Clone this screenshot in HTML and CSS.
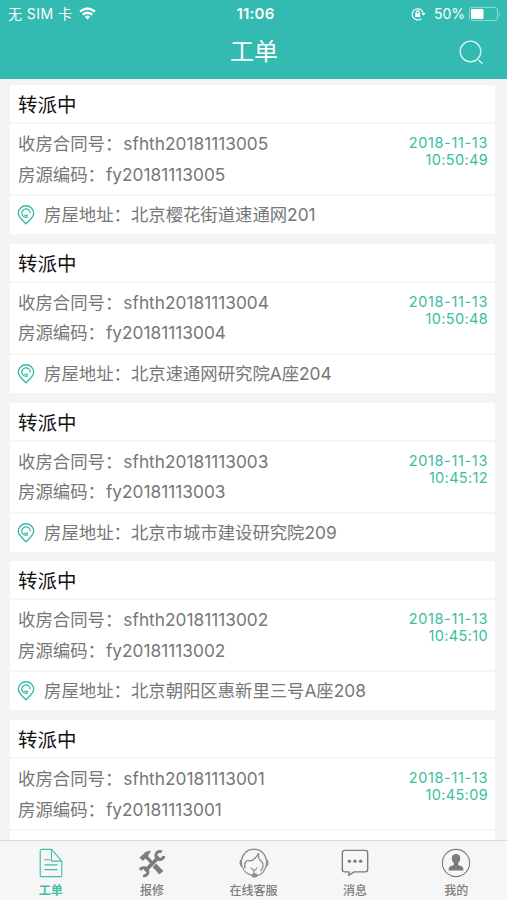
FILE: index.html
```html
<!DOCTYPE html>
<html lang="zh-CN">
<head>
  <meta charset="UTF-8">
  <meta name="viewport" content="width=device-width, initial-scale=1">
  <title>工单</title>
  <link rel="stylesheet" href="styles.css">
</head>
<body>
  <header class="header">
    <div class="status">
      <div class="status-left">
        <span>无 SIM 卡</span>
        <svg class="wifi" viewBox="0 0 17 13" fill="none" stroke="#fff" stroke-width="2.3">
          <path d="M1 4.7Q8.5-1.7 16 4.7M3.7 7.7Q8.5 3.7 13.3 7.7"/>
          <path d="M5.8 9.7Q8.5 7.5 11.2 9.7L8.5 12.6z" fill="#fff" stroke="none"/>
        </svg>
      </div>
      <div class="clock">11:06</div>
      <div class="status-right">
        <svg class="lock" viewBox="0 0 15 14" fill="none" stroke="#fff" stroke-width="1.2">
          <path d="M10.4 11.7A5.6 5.6 0 1 1 12.4 7"/>
          <path d="M10.4 6h4.2l-2.1 2.8z" fill="#fff" stroke="none"/>
          <path d="M4.2 6.4h5v3.8h-5z" fill="#fff" stroke="none"/>
          <path d="M5.2 6.5V5.3a1.5 1.5 0 0 1 3 0v1.2"/>
        </svg>
        <span>50%</span>
        <svg class="battery" viewBox="0 0 32 14">
          <rect x=".5" y=".5" width="28" height="13" rx="2.5" fill="none" stroke="#8ad8d1"/>
          <rect x="2" y="2" width="12.5" height="10" rx="1" fill="#fff"/>
          <path d="M30 4.5q2 2.5 0 5z" fill="#8ad8d1"/>
        </svg>
      </div>
    </div>
    <div class="title-bar">
      <h1>工单</h1>
      <svg class="search" viewBox="0 0 26 26" fill="none" stroke="#d5f7f3" stroke-width="1.3">
        <circle cx="12.5" cy="12.5" r="10.3"/>
        <path d="M20.5 21l4 3.8"/>
      </svg>
    </div>
  </header>

  <main class="list" id="list"></main>

  <nav class="tabs">
    <a class="tab active">
      <svg viewBox="0 0 32 32" fill="none" stroke="currentColor" stroke-width="1.2">
        <path d="M16.5 1.5H6A1.5 1.5 0 0 0 4.5 3v26A1.5 1.5 0 0 0 6 30.5h20a1.500 1.500 0 0 0 1.500-1.500V14zM16.500 1.500V14h11M9 12.500h6M9 18h14M9 23h14"/>
      </svg>
      <span>工单</span>
    </a>
    <a class="tab">
      <svg viewBox="0 0 32 32" fill="none" stroke="currentColor">
        <path d="M10 9.500L17 17" stroke-width="3.600"/>
        <path d="M18.500 18.500l7.500 8" stroke-width="5.500"/>
        <path d="M2.500 10.500L9 4.500q2.500-2 6-1.500l-3.500 6-5 4.500z" fill="currentColor" stroke="none"/>
        <path d="M8.500 24.500L23.500 9.500" stroke-width="4"/>
        <path d="M26.500 4.200A4.300 4.300 0 1 0 28.700 8.500M3.500 23.500A4.300 4.300 0 1 1 6.500 29.500" stroke-width="3.200"/>
      </svg>
      <span>报修</span>
    </a>
    <a class="tab">
      <svg viewBox="0 0 32 32" fill="none" stroke="currentColor" stroke-width="1.200" opacity=".85">
        <path d="M3 12.500C4.500 5 9.500 1.300 16 1.300S27.500 5 29 12.500" stroke-width="1.500"/>
        <path d="M2.500 12.500Q-.5 16 3 20zM29.500 12.500q3 3.500-.5 7.500z" fill="currentColor"/>
        <path d="M6.500 21.500C5 16 7.500 13 10.500 13.500c4 1 8-3.500 10.500-8-1 5 .5 7 3.500 9.500 2 3 1 7-1.500 9.500" stroke-width="1.500"/>
        <path d="M3.500 19.500C5 25.500 9.500 28.500 16 29.500M28.500 19.500C27.500 25 23 28.500 19 29.500M12.500 21l3.500 3.500 3.500-3.500M16 24.500v4"/>
        <ellipse cx="16.500" cy="29.300" rx="2.500" ry="1.700" fill="currentColor"/>
      </svg>
      <span>在线客服</span>
    </a>
    <a class="tab">
      <svg viewBox="0 0 32 32" fill="none" stroke="currentColor" stroke-width="1.500">
        <path d="M5 2.500h22a2.500 2.500 0 0 1 2.500 2.500v18a2.500 2.500 0 0 1-2.500 2.500H15L9.500 29v-3.500H5A2.500 2.500 0 0 1 2.500 23V5A2.500 2.500 0 0 1 5 2.500z"/>
        <g fill="currentColor" stroke="none">
          <circle cx="10" cy="14" r="1.800"/>
          <circle cx="16" cy="14" r="1.800"/>
          <circle cx="22" cy="14" r="1.800"/>
        </g>
      </svg>
      <span>消息</span>
    </a>
    <a class="tab">
      <svg viewBox="0 0 32 32" fill="currentColor">
        <circle cx="16" cy="16" r="14.500" fill="none" stroke="currentColor" stroke-width="1.200"/>
        <path d="M16 6.500c3 0 4.500 2 4.500 4.500 0 2-1 4-2.200 5v2.200l4.200 1.600q1.500 1 1.500 4.200H8q0-3.200 1.500-4.200l4.200-1.600V16c-1.200-1-2.200-3-2.200-5 0-2.500 1.500-4.500 4.500-4.500z"/>
      </svg>
      <span>我的</span>
    </a>
  </nav>

  <script>
    const orders = [
      { no: "005", time: "10:50:49", address: "北京樱花街道速通网201" },
      { no: "004", time: "10:50:48", address: "北京速通网研究院A座204" },
      { no: "003", time: "10:45:12", address: "北京市城市建设研究院209" },
      { no: "002", time: "10:45:10", address: "北京朝阳区惠新里三号A座208" },
      { no: "001", time: "10:45:09" }
    ];

    function addressRow(address) {
      if (!address) return "";
      return `
        <div class="address">
          <svg class="pin" viewBox="0 0 18 20" fill="none" stroke="#38b9a7" stroke-width="1.4">
            <path d="M9 18.8C5 15 1.3 12 1.3 8.3a7.7 7.5 0 0 1 15.4 0C16.7 12 13 15 9 18.8z"/>
            <path d="M11 11.8A4.2 4.2 0 1 1 13.2 8.5M7.500 9.800Q9 11.500 10.800 9.800" stroke-width="1.300"/>
          </svg>
          <span>房屋地址：<span class="place">${address}</span></span>
        </div>`;
    }

    document.getElementById("list").innerHTML = orders.map(o => `
      <section class="card">
        <h2>转派中</h2>
        <div class="info">
          <div>
            <p>收房合同号：<span class="code">sfhth20181113${o.no}</span></p>
            <p>房源编码：<span class="code">fy20181113${o.no}</span></p>
          </div>
          <time><span class="date">2018-11-13</span><br>${o.time}</time>
        </div>${addressRow(o.address)}
      </section>`).join("");
  </script>
</body>
</html>
```
FILE: styles.css
```css
* {
  box-sizing: border-box;
}

body {
  display: flex;
  flex-direction: column;
  margin: 0;
  height: 100vh;
  overflow: hidden;
  background: #f4f4f4;
  font-family: Inter, "Noto Sans CJK SC", sans-serif;
}

h1, h2, p {
  margin: 0;
  font-weight: 400;
}

.header {
  flex: none;
  height: 79px;
  background: #33bab1;
  color: #fff;
}

.status {
  display: grid;
  grid-template-columns: 1fr auto 1fr;
  align-items: center;
  height: 27px;
  padding: 0 6px 0 8px;
  font-size: 14px;
  line-height: 27px;
}

.status-left,
.status-right {
  display: flex;
  align-items: center;
}

.status-left {
  gap: 7px;
  letter-spacing: 0.45px;
}

.status-right {
  justify-content: flex-end;
}

.wifi {
  width: 17px;
  height: 13px;
}

.clock {
  margin-left: 2px;
  font-size: 15px;
  font-weight: 600;
  letter-spacing: 0.2px;
}

.lock {
  width: 15px;
  height: 14px;
  margin-right: 8px;
}

.battery {
  width: 32px;
  height: 14px;
  margin-left: 4px;
}

.title-bar {
  display: grid;
  grid-template-columns: 1fr auto 1fr;
  align-items: center;
  height: 50px;
  padding-right: 23px;
}

.title-bar h1 {
  grid-column: 2;
  margin-left: 24px;
  font-size: 24px;
  line-height: 50px;
}

.search {
  justify-self: end;
  width: 26px;
  height: 26px;
}

.list {
  flex: 1;
  min-height: 0;
  overflow: hidden;
  padding: 6px 12px 0 10px;
}

.card {
  height: 149px;
  margin-bottom: 9.8px;
  background: #fff;
}

.card h2 {
  height: 39px;
  padding-left: 8px;
  border-bottom: 2px solid #f5f5f5;
  color: #111;
  font-size: 19.5px;
  line-height: 40px;
}

.info {
  display: flex;
  justify-content: space-between;
  height: 72px;
  padding: 5px 7px 0 8px;
  border-bottom: 2px solid #f5f5f5;
}

.info p {
  color: #777;
  font-size: 17.4px;
  line-height: 30.5px;
}

.code {
  margin-left: 1px;
  font-size: 17.3px;
}

.info time {
  padding-top: 5px;
  color: #3bbda0;
  font-size: 14.5px;
  line-height: 17px;
  letter-spacing: 0.35px;
  text-align: right;
}

.date {
  letter-spacing: 0.65px;
}

.address {
  display: flex;
  align-items: center;
  gap: 9px;
  height: 38px;
  padding-left: 7px;
  color: #777;
  font-size: 17.4px;
  line-height: 38px;
}

.place {
  font-size: 17.35px;
}

.pin {
  width: 18px;
  height: 20px;
}

.tabs {
  display: flex;
  flex: none;
  height: 60px;
  border-top: 1px solid #d8d8d8;
  background: #f6f6f6;
}

.tab {
  display: flex;
  flex: 1;
  flex-direction: column;
  align-items: center;
  padding-top: 7px;
  color: #7c7c7c;
  font-size: 12px;
  font-weight: 500;
  line-height: 18px;
}

.tab svg {
  width: 32px;
  height: 32px;
  margin-bottom: 4px;
}

.tab.active {
  color: #3fbfa8;
  font-weight: 700;
}
```
